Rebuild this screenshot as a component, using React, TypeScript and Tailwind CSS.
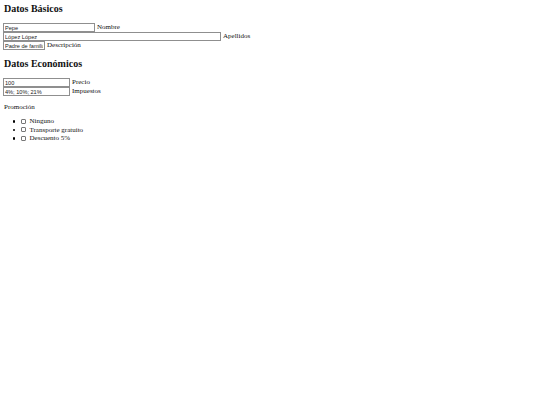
const serif = "font-['Liberation_Serif','Times_New_Roman',serif]";

type Field = { value: string; label: string; width: string };

const basicos: Field[] = [
  { value: "Pepe", label: "Nombre", width: "w-[92px]" },
  { value: "López López", label: "Apellidos", width: "w-[218px]" },
  { value: "Padre de familia", label: "Descripción", width: "w-[42px]" },
];

const economicos: Field[] = [
  { value: "100", label: "Precio", width: "w-[67px]" },
  { value: "4%; 10%; 21%", label: "Impuestos", width: "w-[67px]" },
];

const promociones = ["Ninguno", "Transporte gratuito", "Descuento 5%"];

function FieldRow({ field }: { field: Field }) {
  return (
    <div className="flex h-[9px] items-center">
      <input
        readOnly
        value={field.value}
        className={`${field.width} h-[8.5px] shrink-0 border border-[#8f8f8f] bg-white px-[1px] font-['Liberation_Sans',Arial,sans-serif] text-[5.6px] leading-[6px] text-[#222] outline-none`}
      />
      <span className="ml-[2px] text-[7px] leading-[9px] text-[#111]">{field.label}</span>
    </div>
  );
}

export default function App() {
  return (
    <div className={`${serif} min-h-[405px] w-[540px] bg-white px-[3px] pt-[3px] text-[#111]`}>
      <h2 className="pl-[1px] text-[10px] font-bold leading-[12px]">Datos Básicos</h2>
      <div className="mt-[8px] flex flex-col">
        {basicos.map((f) => (
          <FieldRow key={f.label} field={f} />
        ))}
      </div>

      <h2 className="mt-[8px] pl-[1px] text-[10px] font-bold leading-[12px]">Datos Económicos</h2>
      <div className="mt-[8px] flex flex-col">
        {economicos.map((f) => (
          <FieldRow key={f.label} field={f} />
        ))}
      </div>

      <p className="mt-[6.5px] pl-[1px] text-[7px] leading-[9px]">Promoción</p>
      <ul className="mt-[5.5px] flex flex-col">
        {promociones.map((p) => (
          <li key={p} className="flex h-[8.5px] items-center pl-[9.5px] text-[7px] leading-[8.5px]">
            <span className="h-[2.5px] w-[2.5px] rounded-full bg-black" />
            <span className="ml-[6px] h-[5px] w-[5px] rounded-[1px] border border-[#777] bg-white" />
            <span className="ml-[3.5px]">{p}</span>
          </li>
        ))}
      </ul>
    </div>
  );
}
